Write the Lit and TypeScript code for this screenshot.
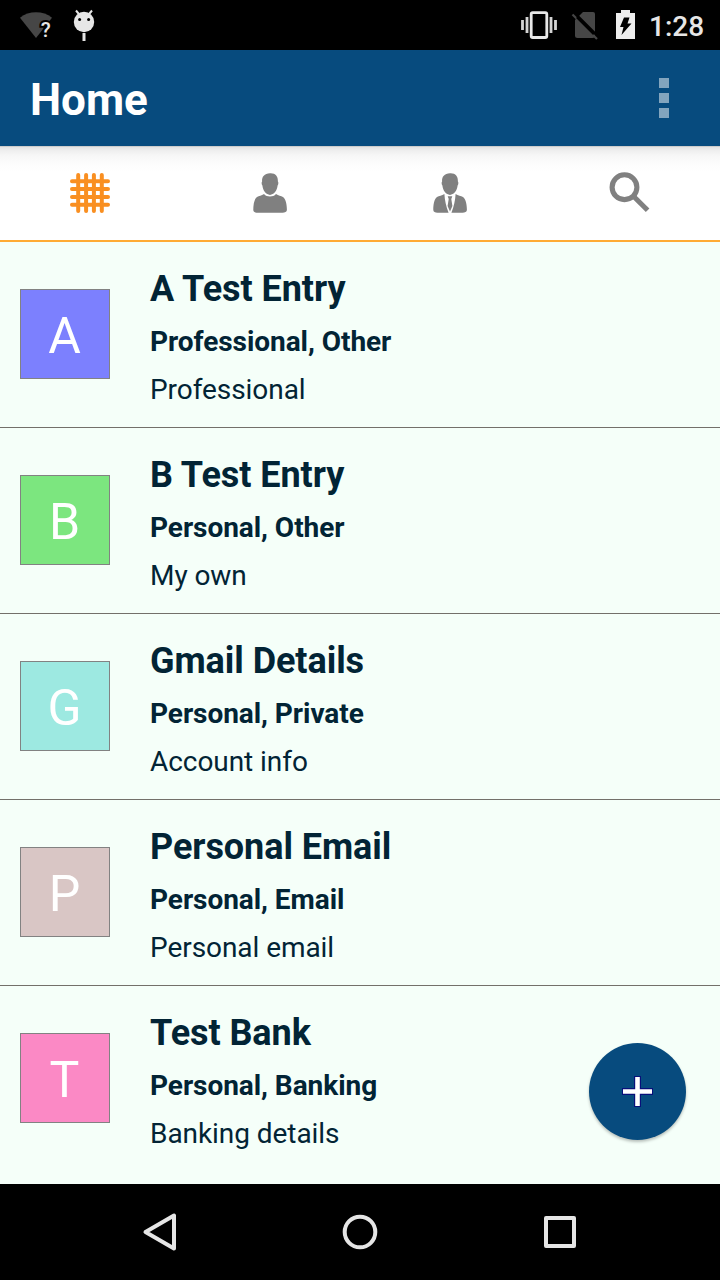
import { LitElement, html, css, svg } from "lit";
import { customElement } from "lit/decorators.js";

interface Entry {
  letter: string;
  color: string;
  title: string;
  tags: string;
  note: string;
}

const ENTRIES: Entry[] = [
  { letter: "A", color: "#7c80fe", title: "A Test Entry", tags: "Professional, Other", note: "Professional" },
  { letter: "B", color: "#7ce67f", title: "B Test Entry", tags: "Personal, Other", note: "My own" },
  { letter: "G", color: "#9de9e1", title: "Gmail Details", tags: "Personal, Private", note: "Account info" },
  { letter: "P", color: "#d9c6c5", title: "Personal Email", tags: "Personal, Email", note: "Personal email" },
  { letter: "T", color: "#fb89c5", title: "Test Bank", tags: "Personal, Banking", note: "Banking details" },
];

const HEAD = "M20 0.2 C25.4 -0.1 28.2 3.2 27.9 8.4 C28.7 9 28.4 11.6 27.600 12.600 C27.2 17.600 23.800 21.900 20 21.900 C16.200 21.900 12.800 17.600 12.400 12.600 C11.600 11.600 11.300 9 12.100 8.400 C11.700 3.600 14.400 0.500 20 0.200 Z";

const gridIcon = svg`
  <g stroke="#f98f21" stroke-width="4" stroke-linecap="round">
    <path d="M8.200 2V38M16.100 2V38M23.900 2V38M31.800 2V38M2 8.200H38M2 16.100H38M2 23.900H38M2 31.800H38" />
  </g>`;

const personIcon = svg`
  <g fill="#808080">
    <path d=${HEAD} />
    <path d="M14 20.900 C15.500 22.700 17.700 23.400 20 23.400 C22.300 23.400 24.500 22.700 26 20.900 C28.500 22.500 31 22.700 33 24 C36 26.300 36.900 32 36.900 37 C36.900 39 34.800 39.700 32.600 39.700 H7.400 C5.200 39.700 3.300 39 3.300 37 C3.300 32 4 26.300 7 24 C9 22.700 11.500 22.500 14 20.900 Z" />
  </g>`;

const businessIcon = svg`
  <g fill="#808080">
    <path d=${HEAD} />
    <path d="M14.400 20.900 C14.800 27 16 33.500 18.600 39.700 H7.400 C5.200 39.700 3.300 39 3.300 37 C3.300 32 4 26.300 7 24 C9 22.700 11.900 22.500 14.400 20.900 Z" />
    <path d="M25.600 20.900 C25.200 27 24 33.500 21.400 39.700 H32.600 C34.800 39.700 36.900 39 36.900 37 C36.900 32 36 26.300 33 24 C31 22.700 28.100 22.500 25.600 20.900 Z" />
    <path d="M17.700 23.200 H22.300 L21.300 26 L22.400 33 L20 38.400 L17.600 33 L18.700 26 Z" />
  </g>`;

const searchIcon = svg`
  <g fill="none" stroke="#808080">
    <circle cx="14.500" cy="14.200" r="12.400" stroke-width="5.100" />
    <path d="M24 23.700L37.600 37.300" stroke-width="5" />
  </g>`;

@customElement("app-root")
export class AppRoot extends LitElement {
  static styles = css`
    :host {
      display: flex;
      flex-direction: column;
      position: relative;
      width: 720px;
      height: 1280px;
      overflow: hidden;
      background: #f5fff9;
      font-family: Roboto, sans-serif;
      color: #022435;
    }
    svg { display: block; flex: none; overflow: visible; }
    .status {
      display: flex;
      justify-content: space-between;
      flex: none;
      height: 50px;
      background: #000;
    }
    .right { display: flex; }
    .clock {
      width: 71px;
      font-size: 28px;
      font-weight: 500;
      line-height: 54px;
      color: #e6e6e6;
    }
    .bar {
      display: flex;
      justify-content: space-between;
      align-items: center;
      flex: none;
      box-sizing: border-box;
      height: 96px;
      padding: 0 51px 0 30px;
      background: #074b7e;
    }
    .heading {
      margin: 0;
      font-size: 44px;
      font-weight: 700;
      line-height: 96px;
      padding-top: 3px;
      color: #fff;
    }
    .more { display: flex; flex-direction: column; gap: 5px; }
    .dot { width: 10px; height: 10px; background: #83a5be; }
    .tabs {
      display: grid;
      grid-template-columns: repeat(4, 1fr);
      flex: none;
      height: 94px;
      border-bottom: 2px solid #ffab35;
      background: linear-gradient(#b5b5b5 0, #e3e3e3 1px, #ededed 4px, #f6f6f6 9px, #fcfcfc 17px, #fff 26px);
    }
    .tab { display: flex; justify-content: center; padding-top: 27px; }
    .list { flex: 1; overflow: hidden; }
    .row {
      display: flex;
      gap: 40px;
      box-sizing: border-box;
      height: 186px;
      padding: 25px 20px 0;
      border-bottom: 1px solid #73706a;
    }
    .row:last-child { border-bottom: none; }
    .avatar {
      box-sizing: border-box;
      width: 90px;
      height: 90px;
      margin-top: 22px;
      padding: 1px 1px 0 0;
      border: 1px solid #828282;
      font-size: 50px;
      line-height: 90px;
      text-align: center;
      color: #fff;
    }
    .title { font-size: 36px; font-weight: 700; line-height: 44px; letter-spacing: -0.06px; }
    .tags { margin-top: 7px; font-size: 28px; font-weight: 700; line-height: 48px; letter-spacing: -0.05px; }
    .note { font-size: 28px; line-height: 48px; letter-spacing: -0.06px; }
    .fab {
      position: absolute;
      right: 34px;
      bottom: 140px;
      width: 97px;
      height: 97px;
      padding: 0;
      border: 0;
      border-radius: 50%;
      background: #074b7e;
      box-shadow: 0 2px 3px rgba(0, 0, 0, 0.25);
    }
    .nav {
      display: flex;
      justify-content: center;
      flex: none;
      height: 96px;
      background: #000;
    }
  `;

  private renderStatus() {
    return html`
      <div class="status">
        <svg width="110" height="50" viewBox="0 0 110 50">
          <path d="M20 17.700 C29 10.500 43 10.500 52 17.700 L36 38 Z" fill="#464646" />
          <text x="40.800" y="37" font-size="20.500" font-weight="500" fill="#e6e6e6" stroke="#000" stroke-width="4" paint-order="stroke">?</text>
          <circle cx="84" cy="22" r="10.200" fill="#e6e6e6" />
          <path d="M79.300 14.500L76 10.500M88.700 14.500L92 10.500" stroke="#e6e6e6" stroke-width="2" />
          <circle cx="79.600" cy="19.400" r="1.500" /><circle cx="88.600" cy="19.400" r="1.500" />
          <rect x="82.500" y="33" width="3" height="8" fill="#e6e6e6" />
        </svg>
        <div class="right">
          <svg width="134" height="50" viewBox="515 0 134 50">
            <rect x="531.200" y="12.700" width="15.600" height="24.800" rx="1.500" fill="none" stroke="#e8e8e8" stroke-width="2.800" />
            <path d="M527 17V33M551 17V33M522.500 20V30M555.500 20V30" stroke="#d4d4d4" stroke-width="2.800" />
            <path d="M583 12H593Q595 12 595 14V35.500Q595 38 592.500 38H577.500Q575 38 575 35.500V20Z" fill="#464646" />
            <path d="M574 12.500L599 37.500" stroke="#000" stroke-width="2.500" />
            <path d="M572.500 14.500L597 39" stroke="#464646" stroke-width="2.200" />
            <path d="M577 17L594 34" stroke="#000" stroke-width="2.600" />
            <path d="M616 13H621V10H630V13H635V39H616Z" fill="#eee" />
            <path d="M624 17.500H629.500L627.500 23.500H631.500L621.500 35L623.500 27H620Z" fill="#000" />
          </svg>
          <div class="clock">1:28</div>
        </div>
      </div>`;
  }

  render() {
    const tabs = [gridIcon, personIcon, businessIcon, searchIcon];
    return html`
      ${this.renderStatus()}
      <div class="bar">
        <h1 class="heading">Home</h1>
        <div class="more"><i class="dot"></i><i class="dot"></i><i class="dot"></i></div>
      </div>
      <div class="tabs">
        ${tabs.map((icon) => html`<div class="tab"><svg width="40" height="40" viewBox="0 0 40 40">${icon}</svg></div>`)}
      </div>
      <div class="list">
        ${ENTRIES.map(
          (e) => html`
            <div class="row">
              <div class="avatar" style="background:${e.color}">${e.letter}</div>
              <div>
                <div class="title">${e.title}</div>
                <div class="tags">${e.tags}</div>
                <div class="note">${e.note}</div>
              </div>
            </div>`
        )}
      </div>
      <button class="fab" aria-label="Add">
        <svg width="97" height="97" viewBox="0 0 97 97">
          <path d="M48.500 33V64M33 48.500H64" stroke="#08107a" stroke-width="7" />
          <path d="M48.500 34V63M34 48.500H63" stroke="#fff" stroke-width="4.600" />
        </svg>
      </button>
      <div class="nav">
        <svg width="480" height="96" viewBox="120 1184 480 96" fill="none" stroke="#e6e6e6" stroke-width="4" stroke-linejoin="round">
          <path d="M174 1215.500V1248.500L145.500 1232Z" />
          <circle cx="360" cy="1232" r="15.300" />
          <rect x="546" y="1218" width="28" height="28" />
        </svg>
      </div>`;
  }
}
